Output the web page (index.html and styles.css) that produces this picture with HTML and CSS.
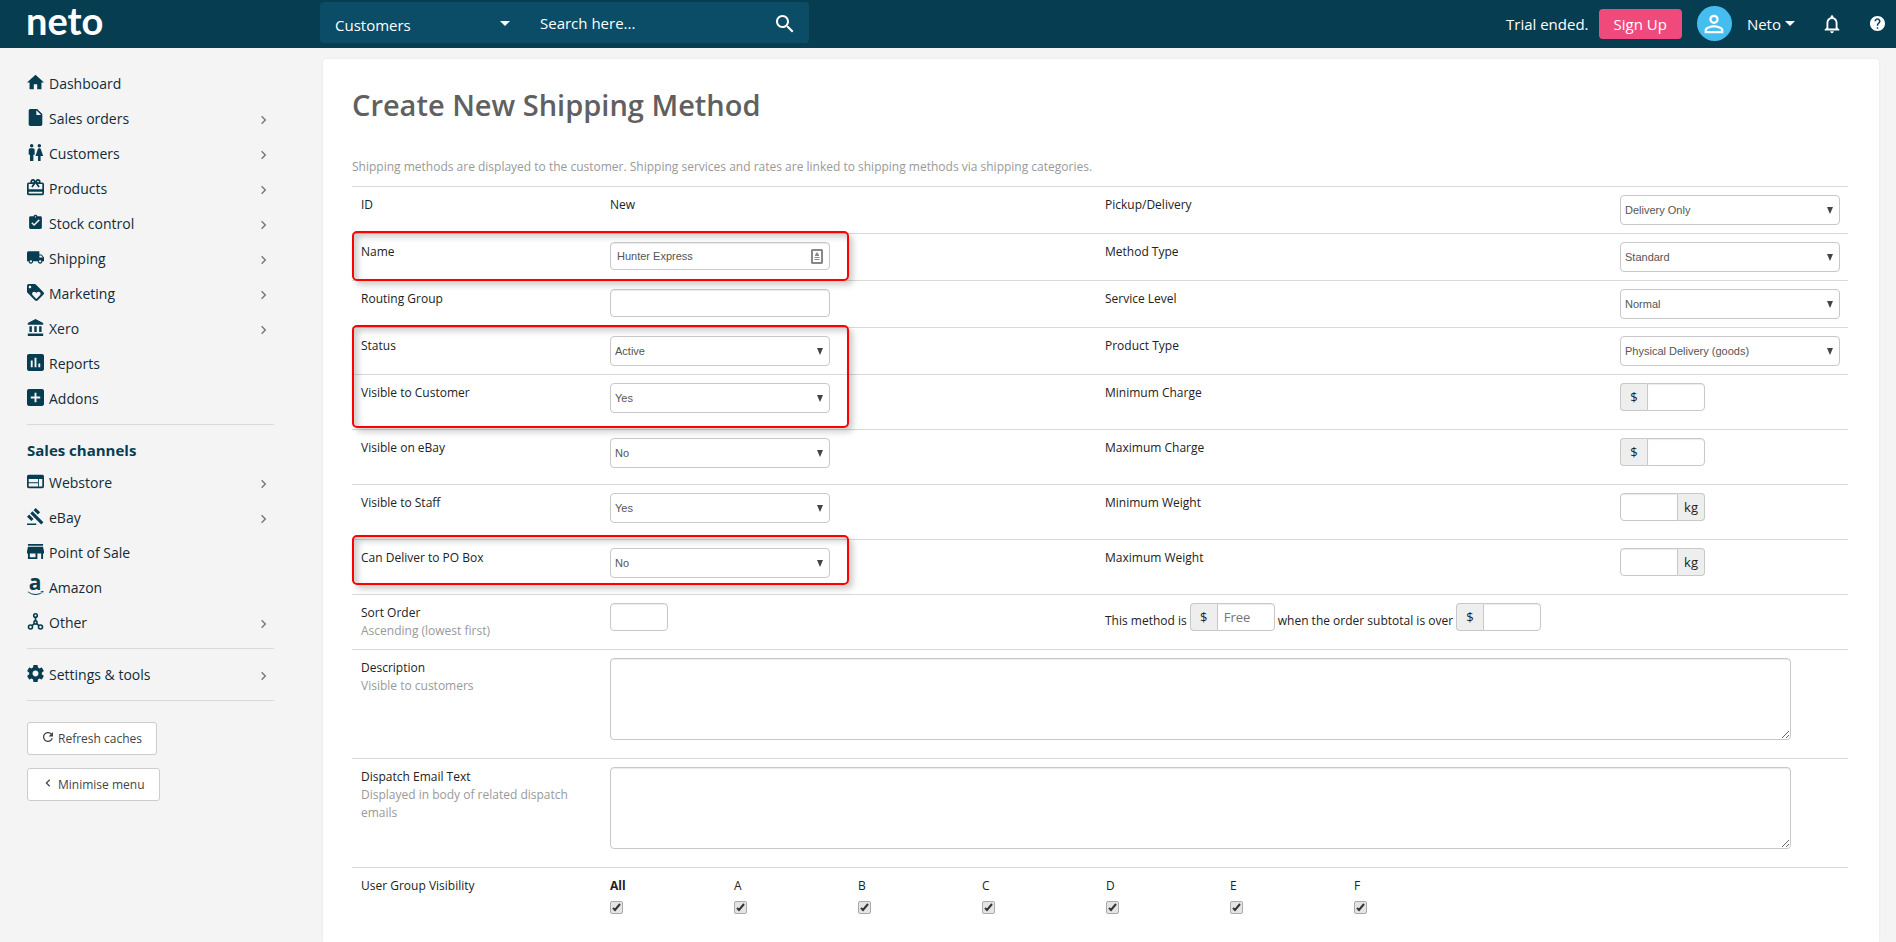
FILE: index.html
```html
<!DOCTYPE html>
<html lang="en">

<head>
  <meta charset="UTF-8" />
  <meta name="viewport" content="width=device-width, initial-scale=1.0" />
  <title>Create New Shipping Method</title>
  <link rel="stylesheet" href="styles.css">
</head>

<body>
  <!-- icon sprite -->
  <svg class="sprite" aria-hidden="true">
    <symbol id="home" viewBox="2 2 20 20"><path d="M10 20v-6h4v6h5v-8h3L12 3 2 12h3v8z" /></symbol>
    <symbol id="file" viewBox="2 2 20 20"><path d="M6 2c-1.1 0-1.99.9-1.99 2L4 20c0 1.1.89 2 1.99 2H18c1.1 0 2-.9 2-2V8l-6-6H6zm7 7V3.5L18.5 9H13z" /></symbol>
    <symbol id="people" viewBox="2 2 20 20"><path d="M5.5 22v-7.5H4V9c0-1.1.9-2 2-2h3c1.1 0 2 .9 2 2v5.5H9.5V22h-4zM18 22v-6h3l-2.54-7.63C18.18 7.55 17.42 7 16.56 7h-.12c-.86 0-1.63.55-1.9 1.37L12 16h3v6h3zM7.5 6c1.11 0 2-.89 2-2s-.89-2-2-2-2 .89-2 2 .89 2 2 2zm9 0c1.11 0 2-.89 2-2s-.89-2-2-2-2 .89-2 2 .89 2 2 2z" /></symbol>
    <symbol id="gift" viewBox="2 2 20 20"><path d="M20 6h-2.18c.11-.31.18-.65.18-1 0-1.66-1.34-3-3-3-1.05 0-1.96.54-2.5 1.35l-.5.67-.5-.68C10.96 2.54 10.05 2 9 2 7.34 2 6 3.34 6 5c0 .35.07.69.18 1H4c-1.11 0-1.99.89-1.99 2L2 19c0 1.11.89 2 2 2h16c1.11 0 2-.89 2-2V8c0-1.11-.89-2-2-2zm-5-2c.55 0 1 .45 1 1s-.45 1-1 1-1-.45-1-1 .45-1 1-1zM9 4c.55 0 1 .45 1 1s-.45 1-1 1-1-.45-1-1 .45-1 1-1zm11 15H4v-2h16v2zm0-5H4V8h5.08L7 10.83 8.62 12 11 8.76l1-1.36 1 1.36L15.38 12 17 10.83 14.92 8H20v6z" /></symbol>
    <symbol id="clipboard" viewBox="0 0 24 24"><path d="M19 3h-4.18C14.4 1.84 13.3 1 12 1c-1.3 0-2.4.84-2.82 2H5c-1.1 0-2 .9-2 2v14c0 1.1.9 2 2 2h14c1.1 0 2-.9 2-2V5c0-1.1-.9-2-2-2zm-7 0c.55 0 1 .45 1 1s-.45 1-1 1-1-.45-1-1 .45-1 1-1zm-2 14l-4-4 1.41-1.41L10 14.17l6.59-6.59L18 9l-8 8z" /></symbol>
    <symbol id="truck" viewBox="1 1 22 22"><path d="M20 8h-3V4H3c-1.1 0-2 .9-2 2v11h2c0 1.66 1.34 3 3 3s3-1.34 3-3h6c0 1.66 1.34 3 3 3s3-1.34 3-3h2v-5l-3-4zM6 18.5c-.83 0-1.5-.67-1.5-1.5s.67-1.5 1.5-1.5 1.5.67 1.5 1.5-.67 1.5-1.5 1.5zm13.5-9l1.96 2.5H17V9.5h2.5zm-1.5 9c-.83 0-1.5-.67-1.5-1.5s.67-1.5 1.5-1.5 1.5.67 1.5 1.5-.67 1.5-1.5 1.5z" /></symbol>
    <symbol id="tag" viewBox="2 2 20 20"><path d="M21.41 11.58l-9-9C12.05 2.22 11.55 2 11 2H4c-1.1 0-2 .9-2 2v7c0 .55.22 1.05.59 1.42l9 9c.36.36.86.58 1.41.58.55 0 1.05-.22 1.41-.59l7-7c.37-.36.59-.86.59-1.41 0-.55-.23-1.06-.59-1.42zM5.5 7C4.67 7 4 6.33 4 5.5S4.67 4 5.5 4 7 4.67 7 5.5 6.33 7 5.5 7zm11.77 8.27L13 19.54l-4.27-4.27C8.28 14.81 8 14.19 8 13.5c0-1.38 1.12-2.5 2.5-2.5.69 0 1.32.28 1.77.74l.73.72.73-.73c.45-.45 1.08-.73 1.77-.73 1.38 0 2.5 1.12 2.5 2.5 0 .69-.28 1.32-.73 1.77z" /></symbol>
    <symbol id="bank" viewBox="1 1 21 21"><path d="M4 10v7h3v-7H4zm6 0v7h3v-7h-3zM2 22h19v-3H2v3zm14-12v7h3v-7h-3zm-4.5-9L2 6v2h19V6l-9.5-5z" /></symbol>
    <symbol id="chart" viewBox="3 3 18 18"><path d="M19 3H5c-1.1 0-2 .9-2 2v14c0 1.1.9 2 2 2h14c1.1 0 2-.9 2-2V5c0-1.1-.9-2-2-2zM9 17H7v-7h2v7zm4 0h-2V7h2v10zm4 0h-2v-4h2v4z" /></symbol>
    <symbol id="plus" viewBox="3 3 18 18"><path d="M19 3H5c-1.1 0-2 .9-2 2v14c0 1.1.9 2 2 2h14c1.1 0 2-.9 2-2V5c0-1.1-.9-2-2-2zm-2 10h-4v4h-2v-4H7v-2h4V7h2v4h4v2z" /></symbol>
    <symbol id="web" viewBox="2 2 20 20"><path d="M20 4H4c-1.1 0-1.99.9-1.99 2L2 18c0 1.1.9 2 2 2h16c1.1 0 2-.9 2-2V6c0-1.1-.9-2-2-2zm-5 14H4v-4h11v4zm0-5H4V9h11v4zm5 5h-4V9h4v9z" /></symbol>
    <symbol id="gavel" viewBox="1 1 22 22"><path d="M1 21h12v2H1zM5.245 8.07l2.83-2.827 14.14 14.142-2.828 2.828zM12.317 1l5.657 5.656-2.83 2.83-5.654-5.66zM3.825 9.485l5.657 5.657-2.828 2.828-5.657-5.657z" /></symbol>
    <symbol id="store" viewBox="3 3 18 18"><path d="M20 4H4v2h16V4zm1 10v-2l-1-5H4l-1 5v2h1v6h10v-6h4v6h2v-6h1zm-9 4H6v-4h6v4z" /></symbol>
    <symbol id="nodes" viewBox="0 0 17 17"><g fill="none" stroke="currentColor" stroke-width="1.6"><circle cx="8.5" cy="2.6" r="1.8" /><circle cx="3.5" cy="14" r="2" /><circle cx="13.5" cy="14" r="2" /><circle cx="8.5" cy="9.5" r="1.6" /><path d="M8.5 4.4v3.5M7.4 10.7l-2.4 2M9.6 10.7l2.4 2" /></g></symbol>
    <symbol id="cog" viewBox="2 2 20 20"><path d="M19.43 12.98c.04-.32.07-.64.07-.98s-.03-.66-.07-.98l2.11-1.65c.19-.15.24-.42.12-.64l-2-3.46c-.12-.22-.39-.3-.61-.22l-2.49 1c-.52-.4-1.08-.73-1.69-.98l-.38-2.65C14.46 2.18 14.25 2 14 2h-4c-.25 0-.46.18-.49.42l-.38 2.65c-.61.25-1.17.59-1.69.98l-2.49-1c-.23-.09-.49 0-.61.22l-2 3.46c-.13.22-.07.49.12.64l2.11 1.65c-.04.32-.07.65-.07.98s.03.66.07.98l-2.11 1.65c-.19.15-.24.42-.12.64l2 3.46c.12.22.39.3.61.22l2.49-1c.52.4 1.08.73 1.69.98l.38 2.65c.03.24.24.42.49.42h4c.25 0 .46-.18.49-.42l.38-2.65c.61-.25 1.17-.59 1.69-.98l2.49 1c.23.09.49 0 .61-.22l2-3.46c.12-.22.07-.49-.12-.64l-2.11-1.65zM12 15.5c-1.93 0-3.5-1.57-3.5-3.5s1.57-3.5 3.5-3.5 3.5 1.57 3.5 3.5-1.57 3.5-3.5 3.5z" /></symbol>
    <symbol id="chevron" viewBox="7 5 10 14"><path d="M10 6L8.59 7.41 13.17 12l-4.58 4.59L10 18l6-6z" /></symbol>
    <symbol id="chevron-left" viewBox="4 4 16 16"><path d="M15.41 7.41L14 6l-6 6 6 6 1.41-1.41L10.83 12z" /></symbol>
    <symbol id="refresh" viewBox="4 4 16 16"><path d="M17.65 6.35C16.2 4.9 14.21 4 12 4c-4.42 0-7.99 3.58-7.99 8s3.57 8 7.99 8c3.73 0 6.84-2.55 7.73-6h-2.08c-.82 2.33-3.04 4-5.65 4-3.31 0-6-2.69-6-6s2.69-6 6-6c1.66 0 3.14.69 4.22 1.78L13 11h7V4l-2.35 2.35z" /></symbol>
    <symbol id="search" viewBox="3 3 18 18"><path d="M15.5 14h-.79l-.28-.27C15.41 12.59 16 11.11 16 9.5 16 5.91 13.09 3 9.5 3S3 5.91 3 9.5 5.91 16 9.5 16c1.61 0 3.09-.59 4.23-1.57l.27.28v.79l5 4.99L20.49 19l-4.99-5zm-6 0C7.01 14 5 11.99 5 9.5S7.01 5 9.5 5 14 7.01 14 9.5 11.99 14 9.5 14z" /></symbol>
    <symbol id="person" viewBox="0 0 24 24"><path d="M12 5.9c1.16 0 2.1.94 2.1 2.1s-.94 2.1-2.1 2.1S9.9 9.16 9.9 8s.94-2.1 2.1-2.1m0 9c2.97 0 6.1 1.46 6.1 2.1v1.1H5.9V17c0-.64 3.13-2.1 6.1-2.1M12 4C9.79 4 8 5.79 8 8s1.79 4 4 4 4-1.79 4-4-1.79-4-4-4zm0 9c-2.67 0-8 1.34-8 4v3h16v-3c0-2.66-5.33-4-8-4z" /></symbol>
    <symbol id="bell" viewBox="0 0 24 24"><path d="M12 22c1.1 0 2-.9 2-2h-4c0 1.1.9 2 2 2zm6-6v-5c0-3.07-1.63-5.64-4.5-6.32V4c0-.83-.67-1.5-1.5-1.5s-1.5.67-1.5 1.5v.68C7.64 5.36 6 7.92 6 11v5l-2 2v1h16v-1l-2-2zm-2 1H8v-6c0-2.48 1.51-4.5 4-4.5s4 2.02 4 4.5v6z" /></symbol>
    <symbol id="help" viewBox="2 2 20 20"><path d="M12 2C6.48 2 2 6.48 2 12s4.48 10 10 10 10-4.48 10-10S17.52 2 12 2zm1 17h-2v-2h2v2zm2.07-7.75l-.9.92C13.45 12.9 13 13.5 13 15h-2v-.5c0-1.1.45-2.1 1.17-2.83l1.24-1.26c.37-.36.59-.86.59-1.41 0-1.1-.9-2-2-2s-2 .9-2 2H8c0-2.21 1.79-4 4-4s4 1.79 4 4c0 .88-.36 1.68-.93 2.25z" /></symbol>
    <symbol id="caret" viewBox="0 0 10 5"><path d="M0 0h10L5 5z" /></symbol>
    <symbol id="contact" viewBox="0 0 12 15"><path d="M1 0h10l1 1v13l-1 1H1l-1-1V1zM2 2v11h8V2zM6 3l2 3v1H4V6zM3.5 8h5v1h-5zM3.5 10h5v1h-5z" fill-rule="evenodd" /></symbol>
  </svg>

  <header class="topbar">
    <a href="#" class="logo">neto</a>
    <form class="search">
      <select class="search-type" aria-label="Search in">
        <option>Customers</option>
      </select>
      <input type="text" class="search-input" placeholder="Search here..." aria-label="Search" />
      <button type="button" class="search-btn" aria-label="Search"><svg><use href="#search" /></svg></button>
    </form>
    <div class="account">
      <span>Trial ended.</span>
      <a href="#" class="signup">Sign Up</a>
      <span class="avatar"><svg><use href="#person" /></svg></span>
      <button type="button" class="user-menu">Neto <svg><use href="#caret" /></svg></button>
      <button type="button" class="bell" aria-label="Notifications"><svg><use href="#bell" /></svg></button>
      <button type="button" class="help" aria-label="Help"><svg><use href="#help" /></svg></button>
    </div>
  </header>

  <div class="page">
    <aside class="sidebar">
      <nav>
        <ul class="menu">
          <li><a href="#"><svg class="icon"><use href="#home" /></svg>Dashboard</a></li>
          <li><a href="#"><svg class="icon"><use href="#file" /></svg>Sales orders<svg class="arrow"><use href="#chevron" /></svg></a></li>
          <li><a href="#"><svg class="icon"><use href="#people" /></svg>Customers<svg class="arrow"><use href="#chevron" /></svg></a></li>
          <li><a href="#"><svg class="icon"><use href="#gift" /></svg>Products<svg class="arrow"><use href="#chevron" /></svg></a></li>
          <li><a href="#"><svg class="icon"><use href="#clipboard" /></svg>Stock control<svg class="arrow"><use href="#chevron" /></svg></a></li>
          <li><a href="#"><svg class="icon"><use href="#truck" /></svg>Shipping<svg class="arrow"><use href="#chevron" /></svg></a></li>
          <li><a href="#"><svg class="icon"><use href="#tag" /></svg>Marketing<svg class="arrow"><use href="#chevron" /></svg></a></li>
          <li><a href="#"><svg class="icon"><use href="#bank" /></svg>Xero<svg class="arrow"><use href="#chevron" /></svg></a></li>
          <li><a href="#"><svg class="icon"><use href="#chart" /></svg>Reports</a></li>
          <li><a href="#"><svg class="icon"><use href="#plus" /></svg>Addons</a></li>
        </ul>
        <h2>Sales channels</h2>
        <ul class="menu">
          <li><a href="#"><svg class="icon"><use href="#web" /></svg>Webstore<svg class="arrow"><use href="#chevron" /></svg></a></li>
          <li><a href="#"><svg class="icon"><use href="#gavel" /></svg>eBay<svg class="arrow"><use href="#chevron" /></svg></a></li>
          <li><a href="#"><svg class="icon"><use href="#store" /></svg>Point of Sale</a></li>
          <li>
            <a href="#">
              <svg class="icon amazon" viewBox="0 0 17 17" aria-hidden="true">
                <text x="8" y="12" text-anchor="middle">a</text>
                <path d="M1 13.4c4.4 3.2 10 3.2 13.6.8l.4.5c-4 3.2-10 2.9-14.3-.8zM13.3 13.4c1.2-.5 2.5-.6 3.2-.2 0 .9-.5 1.8-1.2 2.5.3-.8.5-1.4.4-1.8-.6-.2-1.5-.3-2.4-.5z" />
              </svg>Amazon
            </a>
          </li>
          <li><a href="#"><svg class="icon"><use href="#nodes" /></svg>Other<svg class="arrow"><use href="#chevron" /></svg></a></li>
        </ul>
        <ul class="menu settings">
          <li><a href="#"><svg class="icon"><use href="#cog" /></svg>Settings &amp; tools<svg class="arrow"><use href="#chevron" /></svg></a></li>
        </ul>
      </nav>
      <div class="side-buttons">
        <button type="button"><svg><use href="#refresh" /></svg>Refresh caches</button>
        <button type="button"><svg><use href="#chevron-left" /></svg>Minimise menu</button>
      </div>
    </aside>

    <main class="panel">
      <h1>Create New Shipping Method</h1>
      <p class="intro">Shipping methods are displayed to the customer. Shipping services and rates are linked to shipping methods via shipping categories.</p>

      <form class="fields">
        <div class="row">
          <span class="name">ID</span>
          <span class="name">New</span>
          <label class="name" for="pickup">Pickup/Delivery</label>
          <div><select id="pickup"><option>Delivery Only</option></select></div>
        </div>
        <div class="row">
          <label class="name" for="name">Name</label>
          <div class="name-field">
            <input type="text" id="name" value="Hunter Express" />
            <svg><use href="#contact" /></svg>
          </div>
          <label class="name" for="method-type">Method Type</label>
          <div><select id="method-type"><option>Standard</option></select></div>
          <div class="highlight"></div>
        </div>
        <div class="row">
          <label class="name" for="routing">Routing Group</label>
          <div><input type="text" id="routing" /></div>
          <label class="name" for="service">Service Level</label>
          <div><select id="service"><option>Normal</option></select></div>
        </div>
        <div class="row">
          <label class="name" for="status">Status</label>
          <div><select id="status"><option>Active</option></select></div>
          <label class="name" for="product-type">Product Type</label>
          <div><select id="product-type"><option>Physical Delivery (goods)</option></select></div>
          <div class="highlight two-rows"></div>
        </div>
        <div class="row tall">
          <label class="name" for="visible-customer">Visible to Customer</label>
          <div><select id="visible-customer"><option>Yes</option></select></div>
          <label class="name" for="min-charge">Minimum Charge</label>
          <div><div class="group"><span class="addon">$</span><input type="text" id="min-charge" /></div></div>
        </div>
        <div class="row tall">
          <label class="name" for="visible-ebay">Visible on eBay</label>
          <div><select id="visible-ebay"><option>No</option></select></div>
          <label class="name" for="max-charge">Maximum Charge</label>
          <div><div class="group"><span class="addon">$</span><input type="text" id="max-charge" /></div></div>
        </div>
        <div class="row tall">
          <label class="name" for="visible-staff">Visible to Staff</label>
          <div><select id="visible-staff"><option>Yes</option></select></div>
          <label class="name" for="min-weight">Minimum Weight</label>
          <div><div class="group"><input type="text" id="min-weight" /><span class="addon">kg</span></div></div>
        </div>
        <div class="row tall">
          <label class="name" for="po-box">Can Deliver to PO Box</label>
          <div><select id="po-box"><option>No</option></select></div>
          <label class="name" for="max-weight">Maximum Weight</label>
          <div><div class="group"><input type="text" id="max-weight" /><span class="addon">kg</span></div></div>
          <div class="highlight raised"></div>
        </div>
        <div class="row tall">
          <label class="name" for="sort">Sort Order<small>Ascending (lowest first)</small></label>
          <div><input type="text" id="sort" class="short" /></div>
          <div class="free-over">
            <label for="free">This method is</label>
            <div class="group"><span class="addon">$</span><input type="text" id="free" placeholder="Free" /></div>
            <label for="subtotal">when the order subtotal is over</label>
            <div class="group"><span class="addon">$</span><input type="text" id="subtotal" /></div>
          </div>
        </div>
        <div class="row text-row">
          <label class="name" for="description">Description<small>Visible to customers</small></label>
          <div class="wide"><textarea id="description"></textarea></div>
        </div>
        <div class="row text-row">
          <label class="name" for="dispatch">Dispatch Email Text<small>Displayed in body of related dispatch emails</small></label>
          <div class="wide"><textarea id="dispatch"></textarea></div>
        </div>
        <div class="row">
          <span class="name">User Group Visibility</span>
          <div class="wide user-groups">
            <label><b>All</b><input type="checkbox" checked /></label>
            <label>A<input type="checkbox" checked /></label>
            <label>B<input type="checkbox" checked /></label>
            <label>C<input type="checkbox" checked /></label>
            <label>D<input type="checkbox" checked /></label>
            <label>E<input type="checkbox" checked /></label>
            <label>F<input type="checkbox" checked /></label>
          </div>
        </div>
      </form>
    </main>
  </div>
</body>

</html>
```
FILE: styles.css
```css
* {
  box-sizing: border-box;
}

body {
  margin: 0;
  min-height: 100vh;
  display: flex;
  flex-direction: column;
  background: #f4f4f4;
  color: #222;
  font-family: "Open Sans", "Noto Sans", sans-serif;
  font-size: 12px;
  line-height: 18px;
}

a {
  color: inherit;
  text-decoration: none;
}

button,
input,
select,
textarea {
  font-family: inherit;
}

svg {
  fill: currentColor;
  flex: none;
}

.sprite {
  position: absolute;
  width: 0;
  height: 0;
}

/* ========= Top bar ========= */

.topbar {
  display: flex;
  align-items: center;
  height: 48px;
  padding: 0 11px 0 26px;
  background: #073d51;
  color: #fff;
  font-size: 15px;
}

.logo {
  width: 294px;
  padding-bottom: 8px;
  font-family: Lato, sans-serif;
  font-size: 38px;
  font-weight: bold;
  line-height: 40px;
}

.search {
  display: flex;
  align-items: center;
  width: 489px;
  height: 41px;
  margin-bottom: 3px;
  border-radius: 4px;
  background: #0b4c66;
}

.search-type,
.search-input {
  height: 41px;
  border: 0;
  background: none;
  color: #fff;
  font-size: 15px;
}

.search-type {
  appearance: none;
  width: 205px;
  padding: 4px 15px 0;
  background: url("data:image/svg+xml,%3Csvg xmlns='http://www.w3.org/2000/svg' width='10' height='5'%3E%3Cpath fill='white' d='M0 0h10L5 5z'/%3E%3C/svg%3E") no-repeat 180px 19px;
}

.search-input {
  flex: 1;
  min-width: 0;
  padding: 1px 15px 0;
}

.search-input::placeholder {
  color: #fff;
  opacity: 1;
}

.search-btn,
.user-menu,
.bell,
.help {
  display: flex;
  align-items: center;
  padding: 0;
  border: 0;
  background: none;
  color: #fff;
  cursor: pointer;
}

.search-btn {
  margin: 2px 15px 0 0;
}

.search-btn svg {
  width: 18px;
  height: 18px;
}

.account {
  display: flex;
  align-items: center;
  margin-left: auto;
  padding-bottom: 1px;
}

.signup {
  margin: 0 15px 0 10px;
  padding: 0 15px;
  border-radius: 4px;
  background: #f04a7d;
  font-size: 15px;
  line-height: 30px;
}

.avatar {
  display: flex;
  align-items: center;
  justify-content: center;
  width: 35px;
  height: 35px;
  margin-right: 15px;
  border-radius: 50%;
  background: #45bdee;
}

.avatar svg {
  width: 28px;
  height: 28px;
}

.user-menu {
  gap: 4px;
  font-size: 15px;
}

.user-menu svg {
  width: 10px;
  height: 5px;
}

.bell {
  margin: 0 27px 0 26px;
}

.bell svg {
  width: 22px;
  height: 22px;
}

.help svg {
  width: 15px;
  height: 15px;
}

/* ========= Sidebar ========= */

.page {
  flex: 1;
  display: flex;
}

.sidebar {
  flex: none;
  width: 323px;
  padding: 18px 49px 20px 27px;
}

.menu {
  margin: 0;
  padding: 0 0 8px;
  border-bottom: 1px solid #d9d9d9;
  list-style: none;
}

.menu a {
  display: flex;
  align-items: center;
  gap: 5px;
  height: 35px;
  color: #112c38;
  font-size: 14px;
}

.icon {
  width: 17px;
  height: 17px;
  margin-bottom: 2px;
  color: #073d51;
}

.amazon {
  overflow: visible;
  font-size: 21px;
  font-weight: bold;
}

.arrow {
  width: 7px;
  height: 10px;
  margin: 2px 7px 0 auto;
  color: #777;
}

.sidebar h2 {
  margin: 16px 0 6px;
  color: #073d51;
  font-size: 15px;
  font-weight: bold;
  line-height: 18px;
}

.settings {
  padding-top: 8px;
}

.side-buttons {
  display: flex;
  flex-direction: column;
  align-items: flex-start;
  gap: 13px;
  margin-top: 21px;
}

.side-buttons button {
  display: flex;
  align-items: center;
  gap: 5px;
  height: 33px;
  padding: 0 14px 0 15px;
  border: 1px solid #ccc;
  border-radius: 3px;
  background: #fff;
  color: #444;
  font-size: 12px;
}

.side-buttons svg {
  width: 10px;
  height: 10px;
  margin-bottom: 3px;
}

/* ========= Main panel ========= */

.panel {
  flex: 1;
  min-width: 0;
  margin: 11px 17px 0 0;
  padding: 26px 31px 20px 29px;
  border-radius: 4px 4px 0 0;
  background: #fff;
  box-shadow: 0 0 3px rgba(0, 0, 0, 0.06);
}

h1 {
  margin: 0 0 33px;
  color: #606060;
  font-size: 29px;
  font-weight: 600;
  line-height: 40px;
}

.intro {
  margin: 0 0 10px;
  color: #999;
}

.row {
  position: relative;
  display: grid;
  grid-template-columns: 249fr 495fr 515fr 237fr;
  min-height: 47px;
  padding: 8px 0;
  border-top: 1px solid #d9d9d9;
}

.row > * {
  min-width: 0;
  padding-left: 9px;
}

.row > .name {
  padding-top: 1px;
}

.tall {
  min-height: 55px;
}

.row small {
  display: block;
  padding-right: 30px;
  color: #999;
  font-size: 12px;
}

.fields select,
.fields input[type="text"],
.fields textarea {
  display: block;
  border: 1px solid #c8c8c8;
  border-radius: 4px;
  background: #fff;
  color: #555;
}

.fields select,
.fields input[type="text"] {
  width: 220px;
  font-family: "Liberation Sans", Arial, sans-serif;
  font-size: 11px;
}

.fields select {
  appearance: none;
  height: 30px;
  padding: 0 20px 0 4px;
  background: #fff url("data:image/svg+xml,%3Csvg xmlns='http://www.w3.org/2000/svg' width='6' height='7'%3E%3Cpath fill='%23444' d='M0 0h6L3 7z'/%3E%3C/svg%3E") no-repeat right 6px center;
}

.fields input[type="text"] {
  height: 28px;
  padding: 0 6px;
  box-shadow: inset 0 1px 1px rgba(0, 0, 0, 0.08);
}

.name-field {
  display: flex;
  align-items: flex-start;
}

.name-field svg {
  width: 12px;
  height: 15px;
  margin: 7px 0 0 -19px;
  color: #888;
}

.fields input.short[type="text"] {
  width: 58px;
}

.group {
  display: flex;
  width: 85px;
  height: 28px;
}

.fields .group input[type="text"] {
  flex: 1;
  min-width: 0;
  font-family: inherit;
  font-size: 13px;
}

.fields .addon + input[type="text"] {
  border-radius: 0 4px 4px 0;
}

.fields .group input[type="text"]:first-child {
  border-radius: 4px 0 0 4px;
}

.addon {
  width: 27px;
  border: 1px solid #c8c8c8;
  border-right: 0;
  border-radius: 4px 0 0 4px;
  background: #eee;
  font-size: 13px;
  line-height: 26px;
  text-align: center;
}

input + .addon {
  border-right: 1px solid #c8c8c8;
  border-left: 0;
  border-radius: 0 4px 4px 0;
}

.free-over {
  grid-column: 3 / 5;
  display: flex;
  gap: 3px;
}

.free-over label {
  padding-top: 9px;
}

.wide {
  grid-column: 2 / 5;
  padding-right: 8px;
}

.text-row {
  min-height: 109px;
}

.fields textarea {
  width: 97%;
  height: 82px;
  box-shadow: inset 0 1px 1px rgba(0, 0, 0, 0.08);
}

.fields textarea {
  width: 96%;
}

.user-groups {
  display: grid;
  grid-template-columns: repeat(auto-fill, 124px);
  padding-top: 1px;
}

.user-groups input {
  display: block;
  appearance: none;
  width: 13px;
  height: 13px;
  margin: 6px 0 0;
  border: 1px solid #aaa;
  border-radius: 2px;
  background: #e4e4e4 url("data:image/svg+xml,%3Csvg xmlns='http://www.w3.org/2000/svg' width='9' height='9'%3E%3Cpath fill='none' stroke='%23333' stroke-width='2' d='M1 5l2 2L8 1'/%3E%3C/svg%3E") no-repeat center;
}

/* red frames drawn over the rows */
.highlight {
  position: absolute;
  z-index: 1;
  top: -3px;
  left: 0;
  width: 33.2%;
  height: 50px;
  border: 2px solid #f00;
  border-radius: 5px;
  box-shadow: 4px 4px 6px rgba(0, 0, 0, 0.2), inset 4px 4px 6px rgba(0, 0, 0, 0.2);
  pointer-events: none;
}

.two-rows {
  height: 103px;
}

.raised {
  top: -5px;
}
```
